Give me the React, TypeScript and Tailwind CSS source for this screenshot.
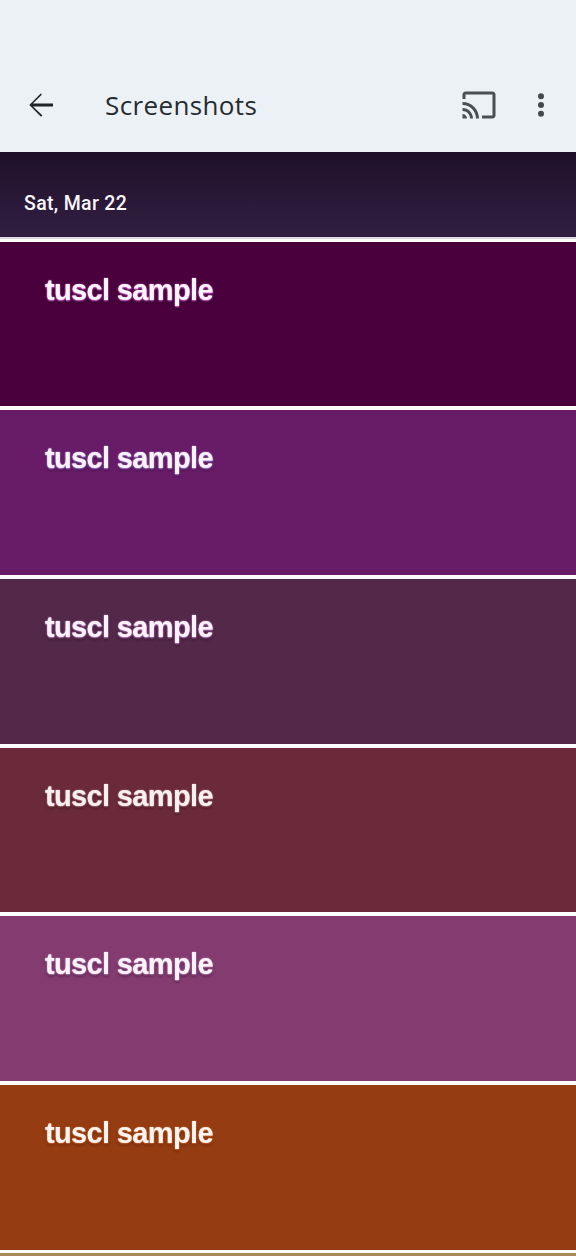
const rows = [
  { bg: "bg-[#4a003c]", shadow: "0 0 1.5px #f070e8, 0 1px 2px #e060d8, 0 2px 3px #1c0018", color: "text-[#fbf6fb]" },
  { bg: "bg-[#681c68]", shadow: "0 0 1.5px #d8a8f0, 0 1px 2px #a878d0, 0 2px 3px #2a0830", color: "text-[#f8f2fb]" },
  { bg: "bg-[#532848]", shadow: "0 0 1.5px #e8a8e8, 0 1px 2px #c080c8, 0 2px 3px #24081c", color: "text-[#fbf2fb]" },
  { bg: "bg-[#6b2a3a]", shadow: "0 0 1.5px #d8a0a8, 0 1px 2px #a86870, 0 2px 3px #2c0810", color: "text-[#f8f0f0]" },
  { bg: "bg-[#843c70]", shadow: "0 0 1.5px #e8b8e0, 0 1px 2px #b070a8, 0 2px 3px #38102c", color: "text-[#fbf2fa]" },
  { bg: "bg-[#963c12]", shadow: "0 0 1.5px #e08858, 0 1px 2px #c85c20, 0 2px 3px #5a1c04", color: "text-[#fbf4f0]" },
];

function Row({ bg, shadow, color }: { bg: string; shadow: string; color: string }) {
  return (
    <div className={`${bg} h-[164.7px] pl-[45px] pt-[30px]`}>
      <div
        className={`${color} font-['Liberation_Sans',Arial,sans-serif] font-bold text-[29px] leading-[36px] tracking-[-0.65px] blur-[0.7px]`}
        style={{ textShadow: shadow }}
      >
        tuscl sample
      </div>
    </div>
  );
}

export default function App() {
  return (
    <div className="w-[576px] h-[1256px] overflow-hidden bg-white flex flex-col">
      <header className="h-[152px] shrink-0 bg-[#ecf1f5] pt-[58px] flex items-center">
        <svg className="ml-[23px] w-9 h-9 shrink-0 text-[#20252a]" viewBox="0 0 24 24" fill="currentColor">
          <path d="M20 11H6.6l5.9-5.8L12 4.2 4.2 12l7.8 7.8.9-1-6.3-5.8H20z" />
        </svg>
        <h1 className="ml-[46px] mt-[-1px] font-['Open_Sans',sans-serif] text-[26px] leading-8 text-[#262b30] tracking-[0.37px] flex-1">
          Screenshots
        </h1>
        <svg className="w-9 h-9 shrink-0 text-[#4a4f54]" viewBox="0 0 24 24" fill="currentColor">
          <path d="M21 3H3c-1.1 0-2 .9-2 2v3h2V5h18v14h-7v2h7c1.1 0 2-.9 2-2V5c0-1.1-.9-2-2-2zM1 18v3h3c0-1.66-1.34-3-3-3zm0-4v2c2.76 0 5 2.24 5 5h2c0-3.87-3.13-7-7-7zm0-4v2c4.97 0 9 4.03 9 9h2c0-6.08-4.93-11-11-11z" />
        </svg>
        <svg className="ml-[26px] mr-[17.5px] w-9 h-9 shrink-0 text-[#44494e]" viewBox="0 0 24 24" fill="currentColor">
          <circle cx="12" cy="6.2" r="2" />
          <circle cx="12" cy="12" r="2" />
          <circle cx="12" cy="17.8" r="2" />
        </svg>
      </header>
      <div className="h-[85px] shrink-0 bg-gradient-to-b from-[#1f1029] to-[#311f42] pl-6 pt-[38px]">
        <span className="block font-['Roboto',sans-serif] font-medium text-[19.5px] leading-7 tracking-[0.33px] text-[#f8f6fa]">
          Sat, Mar 22
        </span>
      </div>
      <div className="h-[2px] shrink-0 bg-[#dedcdf]" />
      <div className="flex flex-col gap-[4px] pt-[2.5px]">
        {rows.map((r) => (
          <Row key={r.bg} {...r} />
        ))}
        <div className="h-[4px] mt-[-0.7px] bg-[#a88858]" />
      </div>
    </div>
  );
}
